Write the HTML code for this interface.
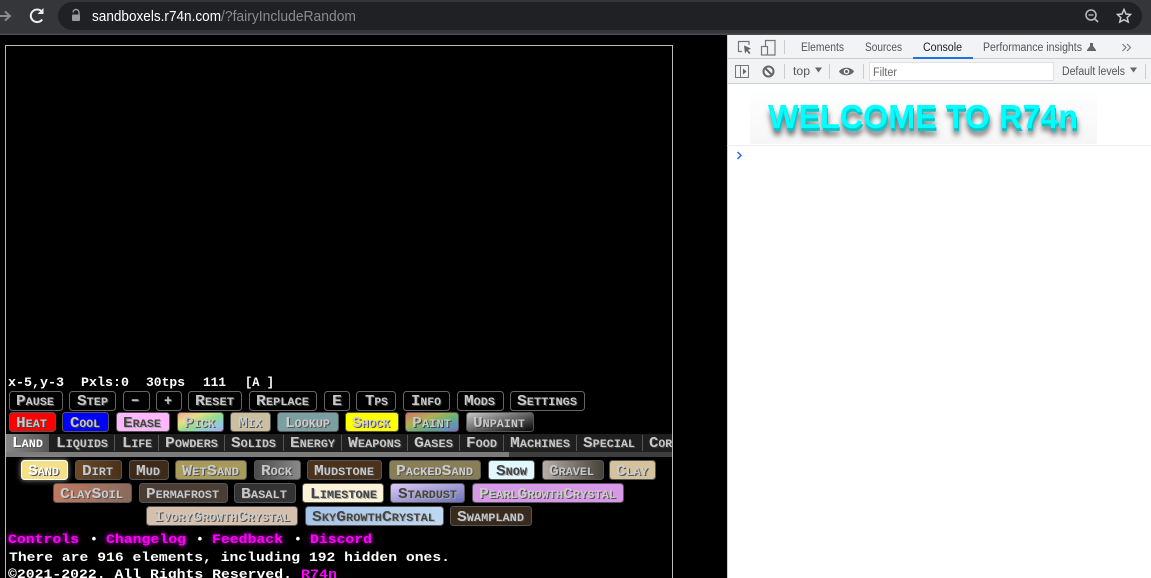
<!DOCTYPE html>
<html><head><meta charset="utf-8"><style>
html,body{margin:0;padding:0;background:#000;width:1151px;height:578px;overflow:hidden}
svg{display:block}
.b{font:bold 15px "Liberation Mono",monospace;font-variant:small-caps;fill:#c8c8c8;text-shadow:1px 1px 0 #444}
.d{fill:#444;text-shadow:1px 1px 0 #aaa}
.l{fill:#ccc;text-shadow:1px 1px 0 #555}
.w{fill:#fff;text-shadow:1px 1px 0 #555}
.m{font:bold 13px "Liberation Mono",monospace;fill:#fff}
.p{fill:#f0f;text-shadow:0 0 4px #f0f}
.u{font:14.5px "Liberation Sans",sans-serif}
.t{font:11.5px "Liberation Sans",sans-serif;fill:#555}
.o{stroke:#666;stroke-width:1;fill:#000}
.c{stroke:#555;stroke-width:1}
.i{fill:none;stroke:#777;stroke-width:1.2}
</style></head><body>
<svg width="1151" height="578" viewBox="0 0 1151 578" xmlns="http://www.w3.org/2000/svg">
<defs>
<linearGradient id="rb" x1="0" y1="0" x2="1" y2="1"><stop offset="0" stop-color="#f5a0a0"/><stop offset=".3" stop-color="#e8e080"/><stop offset=".55" stop-color="#90dc90"/><stop offset=".8" stop-color="#90c8e8"/><stop offset="1" stop-color="#c0a0e8"/></linearGradient>
<linearGradient id="rb2" x1="0" y1="0" x2="1" y2="1"><stop offset="0" stop-color="#d87070"/><stop offset=".35" stop-color="#b0b050"/><stop offset=".6" stop-color="#60b080"/><stop offset=".85" stop-color="#6090c0"/><stop offset="1" stop-color="#a060c0"/></linearGradient>
<linearGradient id="unp" x1="0" y1="0" x2="1" y2="1"><stop offset="0" stop-color="#ccc"/><stop offset="1" stop-color="#000"/></linearGradient>
<linearGradient id="land" x1="0" x2="1"><stop offset="0" stop-color="#888"/><stop offset="1" stop-color="#555"/></linearGradient>
<linearGradient id="rock" x1="0" y1="0" x2="1" y2="0"><stop offset="0" stop-color="#4a4a4a"/><stop offset="1" stop-color="#8a8a8a"/></linearGradient>
<linearGradient id="grav" x1="0" y1="0" x2="1" y2="0"><stop offset="0" stop-color="#b8b0a8"/><stop offset="1" stop-color="#454038"/></linearGradient>
<linearGradient id="dirt" x1="0" y1="0" x2="1" y2="0"><stop offset="0" stop-color="#6a4a2a"/><stop offset="1" stop-color="#4a3018"/></linearGradient>
<linearGradient id="clays" x1="0" y1="0" x2="1" y2="0"><stop offset="0" stop-color="#c07a60"/><stop offset="1" stop-color="#8a6a5c"/></linearGradient>
<linearGradient id="star" x1="0" y1="0" x2="1" y2="1"><stop offset="0" stop-color="#e0ccf8"/><stop offset="1" stop-color="#6a70b8"/></linearGradient>
<linearGradient id="sky" x1="0" y1="0" x2="1" y2="0"><stop offset="0" stop-color="#a4c4ec"/><stop offset="1" stop-color="#c0d8f0"/></linearGradient>
<linearGradient id="welc" x1="0" y1="0" x2="0" y2="1"><stop offset="0" stop-color="#fff"/><stop offset="1" stop-color="#f6f6f6"/></linearGradient>
<filter id="glow" x="-30%" y="-50%" width="160%" height="200%"><feGaussianBlur stdDeviation="3"/></filter>
<filter id="ws" x="-10%" y="-50%" width="120%" height="220%"><feGaussianBlur stdDeviation="3"/></filter>
<clipPath id="cv"><rect x="6" y="0" width="666" height="578"/></clipPath>
</defs>

<!-- browser bar -->
<rect width="1151" height="35" fill="#35363a"/>
<rect y="33.5" width="1151" height="1.5" fill="#4a4b4f"/>
<rect x="58" y="2" width="1084" height="28" rx="14" fill="#202124"/>
<path d="M-1 16H9M5 11.5L10 16L5 20.5" fill="none" stroke="#8a8b8d" stroke-width="2"/>
<path d="M42.2 19.5A6.3 6.3 0 1 1 42.5 12.5" fill="none" stroke="#eee" stroke-width="2"/>
<path d="M43.5 8V14H37.5Z" fill="#eee"/>
<path d="M73 12.5A3 3 0 0 1 79 12.5V15" fill="none" stroke="#9a9b9d" stroke-width="1.4"/>
<rect x="72" y="14.5" width="8" height="6.5" rx="1" fill="#9a9b9d"/>
<text class="u" x="92" y="21" fill="#fff" textLength="129" lengthAdjust="spacingAndGlyphs">sandboxels.r74n.com</text>
<text class="u" x="221" y="21" fill="#8a8b8d" textLength="135" lengthAdjust="spacingAndGlyphs">/?fairyIncludeRandom</text>
<circle cx="1091" cy="15" r="5" fill="none" stroke="#bbb" stroke-width="1.5"/>
<path d="M1088.5 15H1093.5" stroke="#bbb" stroke-width="1.3"/><path d="M1095 19L1098 22" stroke="#bbb" stroke-width="1.7"/>
<path d="M1124 9.5L1126 14L1130.5 14.5L1127.2 17.6L1128.2 22L1124 19.7L1119.8 22L1120.8 17.6L1117.5 14.5L1122 14Z" fill="none" stroke="#ccc" stroke-width="1.5"/>

<!-- canvas border -->
<path d="M5.5 578V45.5H672.5V578" fill="none" stroke="#bbb" stroke-width="1"/>

<g clip-path="url(#cv)">
<!-- stats -->
<text class="m" x="8" y="386" textLength="56" lengthAdjust="spacingAndGlyphs">x-5,y-3</text>
<text class="m" x="81" y="386" textLength="48" lengthAdjust="spacingAndGlyphs">Pxls:0</text>
<text class="m" x="146" y="386" textLength="39" lengthAdjust="spacingAndGlyphs">30tps</text>
<text class="m" x="203" y="386" textLength="23" lengthAdjust="spacingAndGlyphs">111</text>
<text class="m" x="245" y="386" textLength="29" lengthAdjust="spacingAndGlyphs">[A ]</text>

<!-- row 1 -->
<rect class="o" x="9.5" y="391.5" width="53" height="19" rx="3"/><text class="b" x="16" y="405" textLength="38" lengthAdjust="spacingAndGlyphs">Pause</text>
<rect class="o" x="69.5" y="391.5" width="46" height="19" rx="3"/><text class="b" x="77" y="405" textLength="31" lengthAdjust="spacingAndGlyphs">Step</text>
<rect class="o" x="123.5" y="391.5" width="26" height="19" rx="3"/><text class="b" x="131" y="405" textLength="8" lengthAdjust="spacingAndGlyphs">−</text>
<rect class="o" x="156.5" y="391.5" width="25" height="19" rx="3"/><text class="b" x="164" y="405" textLength="8" lengthAdjust="spacingAndGlyphs">+</text>
<rect class="o" x="188.5" y="391.5" width="53" height="19" rx="3"/><text class="b" x="195" y="405" textLength="39" lengthAdjust="spacingAndGlyphs">Reset</text>
<rect class="o" x="249.5" y="391.5" width="67" height="19" rx="3"/><text class="b" x="256" y="405" textLength="53" lengthAdjust="spacingAndGlyphs">Replace</text>
<rect class="o" x="324.5" y="391.5" width="25" height="19" rx="3"/><text class="b" x="332" y="405" textLength="10" lengthAdjust="spacingAndGlyphs">E</text>
<rect class="o" x="356.5" y="391.5" width="39" height="19" rx="3"/><text class="b" x="365" y="405" textLength="23" lengthAdjust="spacingAndGlyphs">Tps</text>
<rect class="o" x="403.5" y="391.5" width="46" height="19" rx="3"/><text class="b" x="411" y="405" textLength="30" lengthAdjust="spacingAndGlyphs">Info</text>
<rect class="o" x="457.5" y="391.5" width="46" height="19" rx="3"/><text class="b" x="464" y="405" textLength="31" lengthAdjust="spacingAndGlyphs">Mods</text>
<rect class="o" x="510.5" y="391.5" width="74" height="19" rx="3"/><text class="b" x="517" y="405" textLength="60" lengthAdjust="spacingAndGlyphs">Settings</text>

<!-- row 2 -->
<rect class="c" x="9.5" y="412.5" width="46" height="19" rx="3" fill="#f00"/><text class="b" x="16" y="427" textLength="31" lengthAdjust="spacingAndGlyphs">Heat</text>
<rect class="c" x="62.5" y="412.5" width="46" height="19" rx="3" fill="#00f"/><text class="b" x="70" y="427" textLength="30" lengthAdjust="spacingAndGlyphs">Cool</text>
<rect class="c" x="116.5" y="412.5" width="53" height="19" rx="3" fill="#ffb8ff"/><text class="b d" x="123" y="427" textLength="38" lengthAdjust="spacingAndGlyphs">Erase</text>
<rect class="c" x="177.5" y="412.5" width="46" height="19" rx="3" fill="url(#rb)"/><text class="b l" x="184" y="427" textLength="31" lengthAdjust="spacingAndGlyphs">Pick</text>
<rect class="c" x="230.5" y="412.5" width="40" height="19" rx="3" fill="#cbbf9f"/><text class="b l" x="238" y="427" textLength="24" lengthAdjust="spacingAndGlyphs">Mix</text>
<rect class="c" x="277.5" y="412.5" width="61" height="19" rx="3" fill="#7b9fa0"/><text class="b l" x="285" y="427" textLength="45" lengthAdjust="spacingAndGlyphs">Lookup</text>
<rect class="c" x="345.5" y="412.5" width="53" height="19" rx="3" fill="#ff0"/><text class="b l" x="352" y="427" textLength="38" lengthAdjust="spacingAndGlyphs">Shock</text>
<rect class="c" x="405.5" y="412.5" width="53" height="19" rx="3" fill="url(#rb2)"/><text class="b" x="412" y="427" textLength="39" lengthAdjust="spacingAndGlyphs">Paint</text>
<rect class="c" x="466.5" y="412.5" width="67" height="19" rx="3" fill="url(#unp)"/><text class="b" x="473" y="427" textLength="52" lengthAdjust="spacingAndGlyphs">Unpaint</text>

<!-- tabs -->
<rect x="6" y="434" width="666" height="18" fill="#1f1f1f"/>
<rect x="6" y="434" width="43" height="18" fill="url(#land)"/>
<path d="M114.500 435V451M158.500 435V451M224.500 435V451M283.500 435V451M341.500 435V451M407.500 435V451M459.500 435V451M503.500 435V451M576.500 435V451M642.500 435V451" stroke="#555"/>
<text class="b w" x="12" y="447" textLength="31" lengthAdjust="spacingAndGlyphs">Land</text>
<text class="b" x="56" y="447" textLength="52" lengthAdjust="spacingAndGlyphs">Liquids</text>
<text class="b" x="122" y="447" textLength="30" lengthAdjust="spacingAndGlyphs">Life</text>
<text class="b" x="165" y="447" textLength="53" lengthAdjust="spacingAndGlyphs">Powders</text>
<text class="b" x="231" y="447" textLength="45" lengthAdjust="spacingAndGlyphs">Solids</text>
<text class="b" x="290" y="447" textLength="45" lengthAdjust="spacingAndGlyphs">Energy</text>
<text class="b" x="348" y="447" textLength="53" lengthAdjust="spacingAndGlyphs">Weapons</text>
<text class="b" x="414" y="447" textLength="39" lengthAdjust="spacingAndGlyphs">Gases</text>
<text class="b" x="466" y="447" textLength="31" lengthAdjust="spacingAndGlyphs">Food</text>
<text class="b" x="510" y="447" textLength="60" lengthAdjust="spacingAndGlyphs">Machines</text>
<text class="b" x="583" y="447" textLength="52" lengthAdjust="spacingAndGlyphs">Special</text>
<text class="b" x="649" y="447" textLength="30" lengthAdjust="spacingAndGlyphs">Core</text>
<rect x="6" y="452" width="666" height="5" fill="#3e3e3e"/>
<rect x="6" y="452" width="503" height="5" fill="#7c7c7c"/>

<!-- elements row 1 -->
<rect x="21" y="460" width="47" height="20" rx="3" fill="#fff" filter="url(#glow)" opacity=".6"/>
<rect x="21.500" y="460.500" width="46" height="19" rx="3" fill="#f5e08a" stroke="#fff"/><text class="b w" x="28" y="475" textLength="31" lengthAdjust="spacingAndGlyphs">Sand</text>
<rect class="c" x="75.500" y="460.500" width="46" height="19" rx="3" fill="url(#dirt)"/><text class="b" x="82" y="475" textLength="31" lengthAdjust="spacingAndGlyphs">Dirt</text>
<rect class="c" x="129.500" y="460.500" width="39" height="19" rx="3" fill="#3d2a18"/><text class="b" x="136" y="475" textLength="24" lengthAdjust="spacingAndGlyphs">Mud</text>
<rect class="c" x="175.500" y="460.500" width="71" height="19" rx="3" fill="#a89a58"/><text class="b l" x="182" y="475" textLength="57" lengthAdjust="spacingAndGlyphs">WetSand</text>
<rect class="c" x="254.500" y="460.500" width="46" height="19" rx="3" fill="url(#rock)"/><text class="b" x="261" y="475" textLength="31" lengthAdjust="spacingAndGlyphs">Rock</text>
<rect class="c" x="307.500" y="460.500" width="74" height="19" rx="3" fill="#4a321c"/><text class="b" x="314" y="475" textLength="60" lengthAdjust="spacingAndGlyphs">Mudstone</text>
<rect class="c" x="389.500" y="460.500" width="91" height="19" rx="3" fill="#8a7e56"/><text class="b l" x="396" y="475" textLength="77" lengthAdjust="spacingAndGlyphs">PackedSand</text>
<rect class="c" x="488.500" y="460.500" width="46" height="19" rx="3" fill="#e0f8ff"/><text class="b d" x="496" y="475" textLength="31" lengthAdjust="spacingAndGlyphs">Snow</text>
<rect class="c" x="542.500" y="460.500" width="61" height="19" rx="3" fill="url(#grav)"/><text class="b" x="549" y="475" textLength="45" lengthAdjust="spacingAndGlyphs">Gravel</text>
<rect class="c" x="609.500" y="460.500" width="46" height="19" rx="3" fill="#d4c29c"/><text class="b l" x="616" y="475" textLength="32" lengthAdjust="spacingAndGlyphs">Clay</text>

<!-- elements row 2 -->
<rect class="c" x="53.500" y="483.500" width="78" height="19" rx="3" fill="url(#clays)"/><text class="b l" x="60" y="498" textLength="63" lengthAdjust="spacingAndGlyphs">ClaySoil</text>
<rect class="c" x="139.500" y="483.500" width="88" height="19" rx="3" fill="#4a3e34"/><text class="b" x="146" y="498" textLength="73" lengthAdjust="spacingAndGlyphs">Permafrost</text>
<rect class="c" x="234.500" y="483.500" width="61" height="19" rx="3" fill="#333"/><text class="b" x="241" y="498" textLength="46" lengthAdjust="spacingAndGlyphs">Basalt</text>
<rect class="c" x="302.500" y="483.500" width="81" height="19" rx="3" fill="#fbf2d8"/><text class="b d" x="310" y="498" textLength="67" lengthAdjust="spacingAndGlyphs">Limestone</text>
<rect class="c" x="390.500" y="483.500" width="74" height="19" rx="3" fill="url(#star)"/><text class="b d" x="398" y="498" textLength="59" lengthAdjust="spacingAndGlyphs">Stardust</text>
<rect class="c" x="472.500" y="483.500" width="151" height="19" rx="3" fill="#d898e8"/><text class="b l" x="479" y="498" textLength="137" lengthAdjust="spacingAndGlyphs">PearlGrowthCrystal</text>

<!-- elements row 3 -->
<rect class="c" x="146.500" y="506.500" width="151" height="19" rx="3" fill="#d6bfac"/><text class="b l" x="154" y="521" textLength="136" lengthAdjust="spacingAndGlyphs">IvoryGrowthCrystal</text>
<rect class="c" x="305.500" y="506.500" width="138" height="19" rx="3" fill="url(#sky)"/><text class="b d" x="312" y="521" textLength="123" lengthAdjust="spacingAndGlyphs">SkyGrowthCrystal</text>
<rect class="c" x="450.500" y="506.500" width="81" height="19" rx="3" fill="#3a2a1c"/><text class="b" x="457" y="521" textLength="67" lengthAdjust="spacingAndGlyphs">Swampland</text>

<!-- footer -->
<text class="m p" x="8" y="543" textLength="71" lengthAdjust="spacingAndGlyphs">Controls</text>
<text class="m" x="90" y="543">•</text>
<text class="m p" x="106" y="543" textLength="80" lengthAdjust="spacingAndGlyphs">Changelog</text>
<text class="m" x="196" y="543">•</text>
<text class="m p" x="212" y="543" textLength="71" lengthAdjust="spacingAndGlyphs">Feedback</text>
<text class="m" x="294" y="543">•</text>
<text class="m p" x="310" y="543" textLength="62" lengthAdjust="spacingAndGlyphs">Discord</text>
<text class="m" x="9" y="561" textLength="441" lengthAdjust="spacingAndGlyphs">There are 916 elements, including 192 hidden ones.</text>
<text class="m" x="8" y="578" textLength="284" lengthAdjust="spacingAndGlyphs">©2021-2022. All Rights Reserved.</text>
<text class="m" x="301" y="578" textLength="36" lengthAdjust="spacingAndGlyphs" style="fill:#f0f">R74n</text>
</g>

<!-- devtools -->
<rect x="727" y="35" width="424" height="543" fill="#fff"/>
<rect x="727" y="35" width="424" height="48" fill="#f1f3f4"/>
<rect x="727" y="58" width="424" height="1" fill="#cbcdd1"/>
<rect x="727" y="83" width="424" height="1" fill="#cbcdd1"/>
<rect x="727" y="35" width="1" height="543" fill="#cbcdd1"/>
<path d="M742 51.500H738.500V41.500H749V45" class="i"/>
<path d="M744 45.500L751 48.500L748 50L750.500 53L749 54L746.800 51L745 53.500Z" fill="#666"/>
<rect x="761.500" y="46.500" width="6" height="8.500" class="i"/>
<path d="M765.500 46V40.500H775V55H768" class="i"/>
<rect x="784" y="40" width="1" height="14" fill="#ccc"/>
<text class="t" x="801" y="51" textLength="43" lengthAdjust="spacingAndGlyphs">Elements</text>
<text class="t" x="865" y="51" textLength="37" lengthAdjust="spacingAndGlyphs">Sources</text>
<text class="t" x="923" y="51" textLength="39" lengthAdjust="spacingAndGlyphs" style="fill:#222">Console</text>
<rect x="913" y="57" width="60" height="2" fill="#1a73e8"/>
<text class="t" x="983" y="51" textLength="99" lengthAdjust="spacingAndGlyphs">Performance insights</text>
<path d="M1090 43H1093V46L1096 50V51H1087V50L1090 46Z" fill="#666"/>
<path d="M1122.500 44L1126 47.500L1122.500 51M1127 44L1130.500 47.500L1127 51" fill="none" stroke="#777" stroke-width="1.100"/>

<rect x="735.500" y="65.500" width="13" height="12" fill="none" stroke="#777"/>
<rect x="740" y="65.500" width="1" height="12" fill="#777"/><path d="M743 68.500L746.500 71.500L743 74.500Z" fill="#666"/>
<circle cx="768.500" cy="71.500" r="5" fill="none" stroke="#666" stroke-width="2"/><path d="M765 68L772 75" stroke="#666" stroke-width="2"/>
<rect x="784" y="64" width="1" height="15" fill="#ccc"/>
<text class="t" x="793" y="75" textLength="17" lengthAdjust="spacingAndGlyphs">top</text>
<path d="M815 67.500H822L818.500 72.500Z" fill="#666"/>
<rect x="829" y="64" width="1" height="15" fill="#ccc"/>
<path d="M839 71.500C842 66.500 851 66.500 854 71.500C851 76.500 842 76.500 839 71.500Z" fill="#666"/><circle cx="846.500" cy="71.500" r="2.800" fill="#f1f3f4"/><circle cx="846.500" cy="71.500" r="1.500" fill="#666"/>
<rect x="863" y="64" width="1" height="15" fill="#ccc"/>
<rect x="869.500" y="62.500" width="184" height="18" fill="#fff" stroke="#dfe1e5"/>
<text class="t" x="873" y="76" textLength="24" lengthAdjust="spacingAndGlyphs" style="fill:#666">Filter</text>
<text class="t" x="1062" y="75" textLength="63" lengthAdjust="spacingAndGlyphs">Default levels</text>
<path d="M1130 67.500H1137L1133.500 72.500Z" fill="#666"/>
<rect x="1145" y="64" width="1" height="15" fill="#ccc"/>

<!-- welcome image -->
<rect x="750" y="88" width="347" height="56" fill="url(#welc)"/>
<text x="769" y="135" textLength="310" lengthAdjust="spacingAndGlyphs" filter="url(#ws)" style="font:bold 33px 'Liberation Sans',sans-serif;fill:#555">WELCOME TO R74n</text>
<text x="769" y="131" textLength="310" lengthAdjust="spacingAndGlyphs" style="font:bold 33px 'Liberation Sans',sans-serif;fill:#00c8c8">WELCOME TO R74n</text>
<text x="768" y="128" textLength="310" lengthAdjust="spacingAndGlyphs" style="font:bold 33px 'Liberation Sans',sans-serif;fill:#0ff">WELCOME TO R74n</text>
<rect x="727" y="145" width="424" height="1" fill="#eee"/>
<path d="M737.500 152L741 155.500L737.500 159" fill="none" stroke="#2a6fe0" stroke-width="1.500"/>
</svg>
</body></html>
